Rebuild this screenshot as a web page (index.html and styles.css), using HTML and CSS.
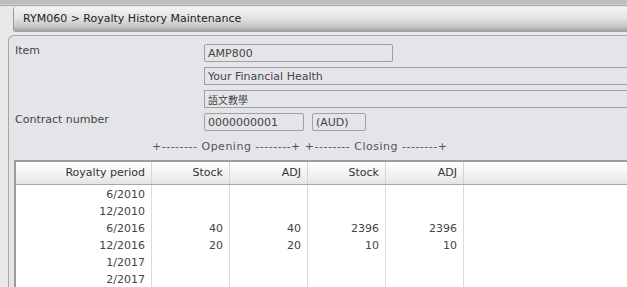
FILE: index.html
```html
<!DOCTYPE html>
<html lang="en">
<head>
  <meta charset="UTF-8">
  <title>RYM060 - Royalty History Maintenance</title>
  <link rel="stylesheet" href="styles.css">
</head>
<body>
  <div class="topband"></div>
  <div class="titlebar">RYM060 &gt; Royalty History Maintenance</div>

  <div class="panel">
    <div class="form">
      <div class="label">Item</div>
      <div class="fields">
        <div class="box w-item">AMP800</div>
        <div class="box w-full">Your Financial Health</div>
        <div class="box w-full cjk">語文教學</div>
      </div>
      <div class="label">Contract number</div>
      <div class="fields row">
        <div class="box w-contract">0000000001</div>
        <div class="box w-cur">(AUD)</div>
      </div>
    </div>

    <div class="groups">+-------- Opening --------+ +-------- Closing --------+</div>

    <div class="grid">
      <div class="grid-head">
        <div class="cell c-period">Royalty period</div>
        <div class="cell">Stock</div>
        <div class="cell">ADJ</div>
        <div class="cell">Stock</div>
        <div class="cell">ADJ</div>
      </div>
      <div class="grid-body">
        <div class="col c-period">
          <div>6/2010</div><div>12/2010</div><div>6/2016</div>
          <div>12/2016</div><div>1/2017</div><div>2/2017</div>
        </div>
        <div class="col">
          <div></div><div></div><div>40</div><div>20</div><div></div><div></div>
        </div>
        <div class="col">
          <div></div><div></div><div>40</div><div>20</div><div></div><div></div>
        </div>
        <div class="col">
          <div></div><div></div><div>2396</div><div>10</div><div></div><div></div>
        </div>
        <div class="col">
          <div></div><div></div><div>2396</div><div>10</div><div></div><div></div>
        </div>
      </div>
    </div>
  </div>
</body>
</html>
```

FILE: styles.css
```css
html, body {
  margin: 0; padding: 0;
  height: 100%;
  overflow: hidden;
  background: #e9e9ea;
  font-family: "DejaVu Sans", Verdana, sans-serif;
  font-size: 11px;
  color: #444;
}
body {
  display: flex;
  flex-direction: column;
}
.topband {
  height: 4px;
  background: #bdbdbd;
  border-bottom: 1px solid #d2d2d2;
  box-shadow: 0 1px 0 #a8a8a8;
  margin-bottom: 2px;
}
.titlebar {
  margin-left: 13px;
  height: 25px;
  flex: none;
  line-height: 24px;
  padding-left: 9px;
  background: linear-gradient(#f4f4f4, #e2e2e2 45%, #c4c4c4 80%, #9c9c9c);
  border-left: 1px solid #9a9a9a;
  border-radius: 3px 0 0 3px;
  color: #222;
}
.panel {
  flex: 1;
  min-height: 0;
  display: flex;
  flex-direction: column;
  margin: 3px 0 0 8px;
  border: 1px solid #a6a6a6;
  border-right: none;
  border-bottom: none;
  border-radius: 6px 0 0 0;
  background: #e4e5e9;
  padding: 8px 0 0 6px;
  overflow: hidden;
}
.form {
  display: grid;
  grid-template-columns: 189px 1fr;
  row-gap: 5px;
}
.label {
  line-height: 14px;
  color: #444;
}
.fields {
  display: flex;
  flex-direction: column;
  gap: 5px;
}
.fields.row {
  flex-direction: row;
  gap: 8px;
}
.box {
  height: 16px;
  line-height: 17px;
  border: 1px solid #a0a0a0;
  padding-left: 3px;
  color: #444;
  white-space: nowrap;
}
.w-item { width: 184px; border-radius: 2px; }
.w-full { border-right: none; }
.w-contract { width: 95px; border-radius: 2px; }
.w-cur { width: 49px; border-radius: 2px; }
.cjk {
  font-family: "Noto Sans CJK TC", "DejaVu Sans", sans-serif;
  font-size: 10px;
}
.groups {
  flex: none;
  padding-left: 137px;
  height: 29px;
  line-height: 31px;
  color: #555;
  letter-spacing: 0.5px;
  white-space: pre;
}
.grid {
  flex: 1;
  min-height: 0;
  overflow: hidden;
  margin-left: -1px;
  border-top: 2px solid #9c9c9c;
  border-left: 2px solid #9c9c9c;
  background: #fff;
  display: flex;
  flex-direction: column;
}
.grid-head {
  display: flex;
  flex: none;
  height: 22px;
  line-height: 22px;
  background: linear-gradient(#ffffff, #f4f4f4 50%, #e4e4e4);
  border-bottom: 1px solid #a8a8a8;
  color: #333;
}
.cell {
  width: 71px;
  padding-right: 6px;
  text-align: right;
  border-right: 1px solid #d4d4d4;
}
.c-period { width: 129px; }
.grid-body {
  display: flex;
  flex: 1;
  min-height: 0;
}
.col {
  width: 71px;
  padding-right: 6px;
  padding-top: 1px;
  text-align: right;
  border-right: 1px solid #dadada;
  color: #444;
}
.col.c-period { width: 129px; }
.col div {
  height: 17px;
  line-height: 17px;
}
```
